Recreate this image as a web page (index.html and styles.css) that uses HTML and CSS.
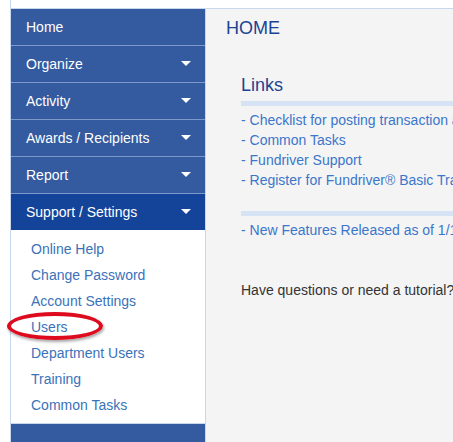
FILE: index.html
```html
<!DOCTYPE html>
<html>
<head>
<meta charset="utf-8">
<link rel="stylesheet" href="styles.css">
</head>
<body>
<div class="page">
  <div class="layout">
    <nav class="sidebar">
      <div class="nav-item">Home</div>
      <div class="nav-item">Organize<span class="caret"></span></div>
      <div class="nav-item">Activity<span class="caret"></span></div>
      <div class="nav-item">Awards / Recipients<span class="caret"></span></div>
      <div class="nav-item">Report<span class="caret"></span></div>
      <div class="nav-item active">Support / Settings<span class="caret"></span></div>
      <ul class="submenu">
        <li><a>Online Help</a></li>
        <li><a>Change Password</a></li>
        <li><a>Account Settings</a></li>
        <li class="marked"><a>Users</a><span class="ring"></span></li>
        <li><a>Department Users</a></li>
        <li><a>Training</a></li>
        <li><a>Common Tasks</a></li>
      </ul>
      <div class="nav-tail"></div>
    </nav>
    <main class="content">
      <h1 class="title">HOME</h1>
      <section class="links">
        <h2 class="links-title">Links</h2>
        <div class="bar"></div>
        <ul class="link-list">
          <li><a>- Checklist for posting transaction and reports</a></li>
          <li><a>- Common Tasks</a></li>
          <li><a>- Fundriver Support</a></li>
          <li><a>- Register for Fundriver® Basic Training</a></li>
        </ul>
        <div class="bar bar2"></div>
        <ul class="link-list">
          <li><a>- New Features Released as of 1/1</a></li>
        </ul>
        <p class="question">Have questions or need a tutorial? Contact us.</p>
      </section>
    </main>
  </div>
</div>
</body>
</html>
```
FILE: styles.css
```css
html, body {
  margin: 0;
  padding: 0;
  background: #ffffff;
  overflow: hidden;
}
body {
  font-family: "Liberation Sans", Arial, sans-serif;
  font-size: 14px;
  width: 453px;
  height: 442px;
}
.page {
  margin-left: 10px;
  padding-top: 8px;
  border-left: 1px solid #c8d7ee;
  height: 434px;
}
.layout {
  display: flex;
  border-top: 1px solid #c8d7ee;
  height: 433px;
}
.sidebar {
  width: 194px;
  flex: none;
  border-right: 1px solid #c8d7ee;
  display: flex;
  flex-direction: column;
  background: #ffffff;
}
.nav-item {
  height: 36px;
  line-height: 36px;
  padding-left: 15px;
  padding-right: 14px;
  color: #ffffff;
  background: #345a9f;
  border-bottom: 1px solid #7d99cb;
  display: flex;
  align-items: center;
  justify-content: space-between;
  white-space: nowrap;
}
.nav-item.active {
  background: #13449a;
  border-bottom: none;
  height: 36px;
}
.caret {
  width: 0;
  height: 0;
  border-left: 5px solid transparent;
  border-right: 5px solid transparent;
  border-top: 5px solid #ffffff;
  margin-top: -2px;
}
.submenu {
  list-style: none;
  margin: 0;
  padding: 6px 0 6px 20px;
  height: 181px;
  border-bottom: 1px solid #c8d7ee;
}
.submenu li {
  line-height: 26px;
  height: 26px;
  position: relative;
}
.submenu a {
  color: #3a72ba;
}
.ring {
  position: absolute;
  left: -24px;
  top: -2px;
  width: 88px;
  height: 20px;
  border: 4px solid #de0a1e;
  border-radius: 50%;
  box-shadow: 1px 2px 3px rgba(0, 0, 0, 0.35);
}
.nav-tail {
  flex: 1;
  background: #345a9f;
}
.content {
  flex: 1;
  background: #f4f4f4;
  padding: 9px 0 0 20px;
  overflow: hidden;
  white-space: nowrap;
}
.title {
  margin: 0;
  font-size: 18px;
  line-height: 21px;
  font-weight: normal;
  color: #1b4391;
}
.links {
  padding-left: 15px;
  padding-top: 36px;
}
.links-title {
  margin: 0;
  font-size: 18px;
  line-height: 21px;
  font-weight: normal;
  color: #1b4391;
}
.bar {
  height: 5px;
  background: #d6e3f4;
  margin-top: 5px;
  margin-bottom: 4px;
  width: 400px;
}
.bar2 {
  margin-top: 21px;
}
.link-list {
  list-style: none;
  margin: 0;
  padding: 0;
}
.link-list li {
  line-height: 20px;
  height: 20px;
}
.link-list a {
  color: #3b76cb;
}
.question {
  margin: 40px 0 0;
  line-height: 20px;
  color: #333333;
}
```
